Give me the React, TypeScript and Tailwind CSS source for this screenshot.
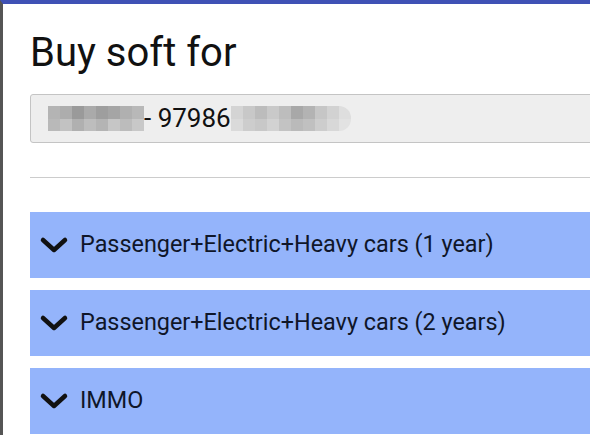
import React from "react";

const items = [
  "Passenger+Electric+Heavy cars (1 year)",
  "Passenger+Electric+Heavy cars (2 years)",
  "IMMO",
];

const leftShades = [
  ["#b4b4b4", "#adadad", "#9a9a9a", "#aaaaaa", "#9e9e9e", "#a5a5a5", "#b0b0b0", "#b8b8b8"],
  ["#b9b9b9", "#c2c2c2", "#b0b0b0", "#bdbdbd", "#b4b4b4", "#c6c6c6", "#bcbcbc", "#c8c8c8"],
];

const rightShades = [
  ["#d4d4d4", "#c8c8c8", "#bcbcbc", "#c9c9c9", "#bdbdbd", "#a8a8a8", "#b3b3b3", "#c6c6c6", "#d2d2d2", "#dedede"],
  ["#dadada", "#cdcdcd", "#c8c8c8", "#d2d2d2", "#c3c3c3", "#bababa", "#c0c0c0", "#cdcdcd", "#d8d8d8", "#e2e2e2"],
];

function Mosaic({ shades }: { shades: string[][] }) {
  return (
    <div className="flex flex-col blur-[0.6px]">
      {shades.map((row, r) => (
        <div key={r} className="flex">
          {row.map((c, i) => (
            <div key={i} className="w-[12px] h-[12.5px]" style={{ backgroundColor: c }} />
          ))}
        </div>
      ))}
    </div>
  );
}

function Chevron() {
  return (
    <svg width="30" height="18" viewBox="0 0 30 18" className="shrink-0">
      <polyline
        points="4,4 15,14 26,4"
        fill="none"
        stroke="#111"
        strokeWidth="4.5"
        strokeLinecap="round"
        strokeLinejoin="round"
      />
    </svg>
  );
}

export default function App() {
  return (
    <div className="w-[590px] h-[435px] overflow-hidden bg-white border-t-4 border-[#3f51b5] border-l-[3px] border-l-[#555] font-['Roboto',sans-serif]">
      <div className="w-[640px] pl-[27px]">
        {/* Title */}
        <h1 className="mt-[26px] text-[40px] leading-[46px] text-[#111] font-normal">Buy soft for</h1>

        {/* Readonly field */}
        <div className="mt-[18px] h-[49px] bg-[#eeeeee] border border-[#c4c4c4] rounded-[3px] flex items-center pl-[17px]">
          <Mosaic shades={leftShades} />
          <span className="text-[26px] text-[#111] whitespace-pre">- 97986</span>
          <div className="rounded-r-[12px] overflow-hidden">
            <Mosaic shades={rightShades} />
          </div>
        </div>

        <div className="mt-[34px] border-t border-[#cccccc]" />

        {/* Accordion */}
        <div className="mt-[34px] flex flex-col gap-[12px]">
          {items.map((label) => (
            <div key={label} className="h-[66px] bg-[#94b4fb] flex items-center pl-[9px] gap-[11px]">
              <Chevron />
              <span className="text-[23.4px] text-[#0f1629]">{label}</span>
            </div>
          ))}
        </div>
      </div>
    </div>
  );
}
